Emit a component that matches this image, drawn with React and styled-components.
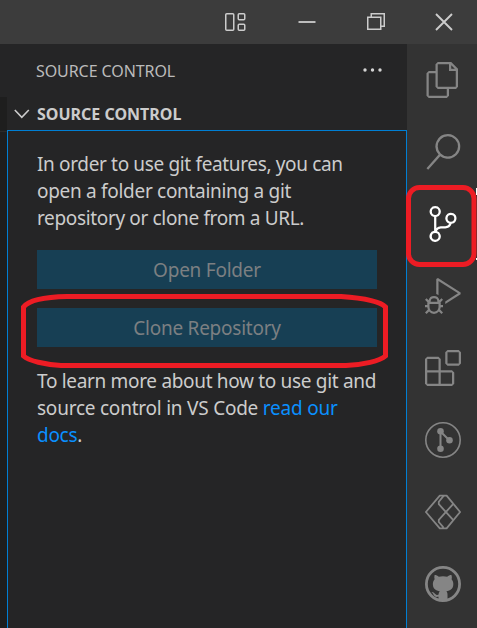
import React from "react";
import styled, { createGlobalStyle } from "styled-components";
import {
  VscFiles,
  VscSearch,
  VscSourceControl,
  VscDebugAlt,
  VscExtensions,
} from "react-icons/vsc";

const GlobalStyle = createGlobalStyle`
  * { box-sizing: border-box; }
  body { margin: 0; background: #252526; overflow: hidden; }
`;

const Window = styled.div`
  position: relative;
  display: flex;
  flex-direction: column;
  width: 477px;
  height: 628px;
  overflow: hidden;
  background: #252526;
  color: #cccccc;
  font-family: "Noto Sans", "Open Sans", sans-serif;
`;

const TitleBar = styled.header`
  display: flex;
  flex: none;
  justify-content: flex-end;
  height: 44px;
  background: #3c3c3c;
`;

const TitleButton = styled.button`
  display: flex;
  align-items: center;
  justify-content: center;
  width: ${(p) => p.$width}px;
  height: 44px;
  padding: 0;
  border: 0;
  background: none;
  color: #cccccc;
`;

const Body = styled.div`
  display: flex;
  flex: 1;
  min-height: 0;
`;

const SideBar = styled.aside`
  display: flex;
  flex: none;
  flex-direction: column;
  width: 407px;
`;

const ViewTitle = styled.div`
  display: flex;
  align-items: center;
  justify-content: space-between;
  height: 53px;
  padding: 0 24px 0 36px;
  color: #bbbbbb;
`;

const ViewLabel = styled.span`
  font-size: 16px;
  line-height: 24px;
  letter-spacing: -0.08px;
  white-space: nowrap;
`;

const ViewArea = styled.div`
  display: flex;
  flex: 1;
`;

const EditorEdge = styled.div`
  flex: none;
  width: 7px;
  background: #1e1e1e;
  &::before {
    content: "";
    display: block;
    height: 34px;
    border-bottom: 1px solid #2b2b2b;
  }
`;

const Pane = styled.section`
  display: flex;
  flex: 1;
  flex-direction: column;
`;

const PaneHeader = styled.div`
  display: flex;
  align-items: center;
  gap: 7px;
  height: 33px;
  padding-left: 7px;
`;

const PaneTitle = styled.span`
  font-size: 16px;
  font-weight: 700;
  line-height: 24px;
  white-space: nowrap;
`;

const PaneContent = styled.div`
  display: flex;
  flex: 1;
  flex-direction: column;
  padding: 20px 29px 0;
  border: 1px solid #007fd4;
  border-bottom: 0;
`;

const Paragraph = styled.p`
  margin: 0;
  font-size: 19px;
  line-height: 27px;
`;

const Line = styled.span`
  display: block;
  letter-spacing: ${(p) => p.$tracking || 0}px;
  white-space: nowrap;
`;

const Link = styled.a`
  color: #0a90ff;
`;

const ButtonStack = styled.div`
  display: flex;
  flex-direction: column;
  gap: 19px;
  margin: 18px 0 21px;
`;

const ActionButton = styled.button`
  height: 39px;
  padding: 2px 0 0;
  border: 0;
  background: #173f54;
  color: #7c7f82;
  font: inherit;
  font-size: 19px;
  line-height: 37px;
  letter-spacing: -0.24px;
`;

const ActivityBar = styled.nav`
  display: flex;
  flex: 1;
  flex-direction: column;
  overflow: hidden;
  background: #333333;
`;

const Activity = styled.div`
  display: flex;
  flex: none;
  align-items: center;
  justify-content: center;
  width: 72px;
  height: 72px;
  color: ${(p) => (p.$active ? "#ffffff" : "#858585")};
`;

const Annotations = styled.svg`
  position: absolute;
  inset: 0;
  pointer-events: none;
`;

const LayoutIcon = () => (
  <svg width="21" height="18" viewBox="0 0 21 18" fill="none" stroke="currentColor" strokeWidth="1.5">
    <rect x="0.75" y="0.75" width="8" height="16.5" rx="1" />
    <rect x="13.25" y="0.75" width="6.5" height="6" rx="1" />
    <rect x="13.25" y="11.25" width="6.5" height="6" rx="1" />
  </svg>
);

const MinimizeIcon = () => (
  <svg width="18" height="18" fill="none" stroke="currentColor" strokeWidth="1.8">
    <path d="M0.5 9h17" />
  </svg>
);

const RestoreIcon = () => (
  <svg width="18" height="18" fill="none" stroke="currentColor" strokeWidth="1.5">
    <path d="M0.75 4.25h13v12h-13z M4.25 4.25v-3.5h13v12.5h-3.5" />
  </svg>
);

const CloseIcon = () => (
  <svg width="18" height="18" fill="none" stroke="currentColor" strokeWidth="1.9">
    <path d="M1 1l16 16M17 1L1 17" />
  </svg>
);

const MoreIcon = () => (
  <svg width="20" height="6" fill="#d4d4d4">
    <circle cx="2" cy="2" r="1.7" />
    <circle cx="9.5" cy="2" r="1.7" />
    <circle cx="17" cy="2" r="1.7" />
  </svg>
);

const ChevronIcon = () => (
  <svg width="16" height="10" fill="none" stroke="currentColor" strokeWidth="1.6">
    <path d="M0.8 1l7 7.3L14.8 1" />
  </svg>
);

const GitGraphIcon = () => (
  <svg width="36" height="36" fill="none" stroke="currentColor">
    <circle cx="18" cy="18" r="17.2" strokeWidth="1.6" />
    <path d="M15.5 9.5v17M15.5 9.5l9 9" strokeWidth="2" />
    <g fill="currentColor" stroke="none">
      <circle cx="15.5" cy="9.3" r="3.3" />
      <circle cx="24.5" cy="18.3" r="3.3" />
      <circle cx="15.5" cy="26.7" r="3.3" />
    </g>
  </svg>
);

const DiamondsIcon = () => (
  <svg width="36" height="36" fill="none" stroke="currentColor" strokeWidth="1.8" strokeLinejoin="round">
    <path d="M18 1.6H14.8L0.9 18L14.8 34.4H18" />
    <path d="M18 34.4L18 32.8L13.8 28V25.8L28.3 9.8" />
    <path d="M18.8 1.6L13.8 7.8V10.2L28.3 26.2" />
    <path d="M18 1.6H21.6L35.1 18L21.6 34.4H18" />
  </svg>
);

const GithubIcon = () => (
  <svg width="36" height="36" fill="none" stroke="currentColor">
    <circle cx="18" cy="18" r="16.6" strokeWidth="2.8" />
    <path
      d="M9.6 9.1c1.6 0 3 .7 4.2 1.6 2.6-.7 5.8-.7 8.4 0 1.2-.9 2.6-1.6 4.2-1.6.6 1.4.6 2.9.2 4.2 1.3 1.6 1.9 3.3 1.7 5.5-.3 4.1-2.9 6-6.9 6.5.8.9 1.1 1.9 1.1 3.2V35h-9v-4.2c-3.6.7-4.5-1-5.2-2.5-.4-.9-1-1.6-1.8-2.2 2.8-.7 3.4 2.6 5.2 2.8.8.1 1.4 0 1.9-.3.1-1.5.4-2.5 1.2-3.3-4-.5-6.6-2.4-6.9-6.5-.2-2.2.4-3.9 1.7-5.5-.4-1.3-.4-2.8 0-4.2z"
      fill="currentColor"
      stroke="none"
    />
  </svg>
);

export default function App() {
  return (
    <Window>
      <GlobalStyle />
      <TitleBar>
        <TitleButton $width={74}><LayoutIcon /></TitleButton>
        <TitleButton $width={69}><MinimizeIcon /></TitleButton>
        <TitleButton $width={70}><RestoreIcon /></TitleButton>
        <TitleButton $width={66}><CloseIcon /></TitleButton>
      </TitleBar>
      <Body>
        <SideBar>
          <ViewTitle>
            <ViewLabel>SOURCE CONTROL</ViewLabel>
            <MoreIcon />
          </ViewTitle>
          <ViewArea>
            <EditorEdge />
            <Pane>
              <PaneHeader>
                <ChevronIcon />
                <PaneTitle>SOURCE CONTROL</PaneTitle>
              </PaneHeader>
              <PaneContent>
                <Paragraph>
                  <Line $tracking={-0.35}>In order to use git features, you can</Line>
                  <Line $tracking={-0.3}>open a folder containing a git</Line>
                  <Line $tracking={-0.35}>repository or clone from a URL.</Line>
                </Paragraph>
                <ButtonStack>
                  <ActionButton>Open Folder</ActionButton>
                  <ActionButton>Clone Repository</ActionButton>
                </ButtonStack>
                <Paragraph>
                  <Line $tracking={-0.32}>To learn more about how to use git and</Line>
                  <Line $tracking={-0.23}>source control in VS Code <Link>read our</Link></Line>
                  <Line $tracking={-0.3}><Link>docs</Link>.</Line>
                </Paragraph>
              </PaneContent>
            </Pane>
          </ViewArea>
        </SideBar>
        <ActivityBar>
          <Activity><VscFiles size={36} /></Activity>
          <Activity><VscSearch size={36} /></Activity>
          <Activity $active><VscSourceControl size={36} /></Activity>
          <Activity><VscDebugAlt size={36} /></Activity>
          <Activity><VscExtensions size={36} /></Activity>
          <Activity><GitGraphIcon /></Activity>
          <Activity><DiamondsIcon /></Activity>
          <Activity><GithubIcon /></Activity>
        </ActivityBar>
      </Body>
      <Annotations width="477" height="628" fill="none" stroke="#ed1c24" strokeWidth="5">
        <path d="M476.5 188v7M476.5 258v2" stroke="#ffffff" strokeWidth="1" />
        <rect x="408.5" y="187.5" width="65.5" height="77" rx="11" />
        <path d="M67 296.5H341C363 298 380 301 385.500 307V356C380 361 363 365 346 365.500H61C45 364.500 29 361 23.500 356V307C29 300 45 297 67 296.500Z" />
      </Annotations>
    </Window>
  );
}
